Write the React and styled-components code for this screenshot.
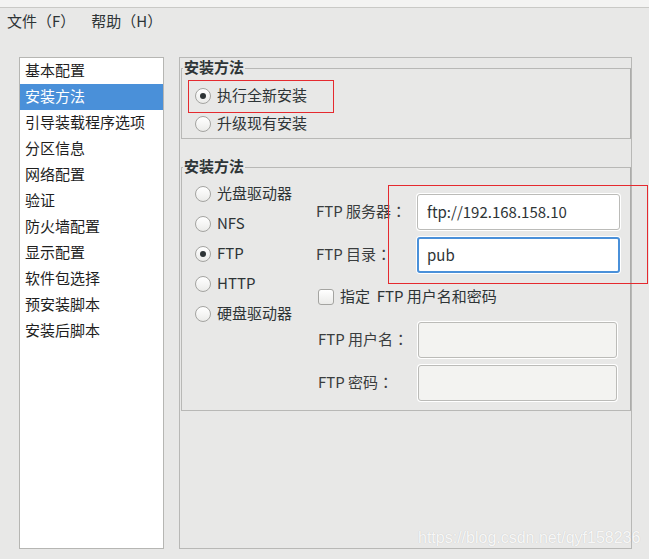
import styled, { createGlobalStyle } from 'styled-components';

const GlobalStyle = createGlobalStyle`
  html, body {
    margin: 0;
    padding: 0;
  }
  body {
    background: #e8e8e7;
    font-family: "Noto Sans CJK SC", "DejaVu Sans", sans-serif;
    font-size: 15px;
    color: #2e3436;
  }
`;

const Window = styled.div`
  position: relative;
  width: 649px;
  height: 559px;
  overflow: hidden;
  background: #e8e8e7;
`;

const TitleStrip = styled.div`
  height: 7px;
  background: #f3f3f2;
  border-bottom: 1px solid #c9c9c6;
`;

const MenuBar = styled.div`
  display: flex;
  height: 28px;
  align-items: center;
  padding-left: 7px;
  gap: 16px;
`;

const MenuItem = styled.span`
  line-height: 26px;
  padding-bottom: 2px;
  color: #2e3436;
`;

const Body = styled.div`
  display: flex;
  padding: 21px 0 0 19px;
`;

const SectionList = styled.ul`
  box-sizing: border-box;
  width: 145px;
  height: 492px;
  margin: 0 15px 0 0;
  padding: 0;
  list-style: none;
  background: #fff;
  border: 1px solid #b6b6b3;
`;

const SectionItem = styled.li`
  box-sizing: border-box;
  height: 26px;
  line-height: 23px;
  padding: 0 0 3px 5px;
  color: ${p => (p.$active ? '#fff' : '#1e1e1e')};
  background: ${p => (p.$active ? '#4a90d9' : 'transparent')};
  white-space: nowrap;
`;

const Panel = styled.div`
  box-sizing: border-box;
  width: 453px;
  height: 492px;
  padding: 2px 0 0 1px;
  border: 1px solid #b8b8b6;
`;

const Group = styled.fieldset`
  margin: ${p => (p.$spaced ? '20px 0 0 0' : '0')};
  padding: 0;
  min-width: 0;
  border: 1px solid #b8b8b6;
  border-right-color: #acacaa;
`;

const Legend = styled.legend`
  margin-left: 1px;
  padding: 0 1px 2px;
  font-weight: bold;
  line-height: 14px;
  color: #2e3436;
`;

const Choices = styled.div`
  display: flex;
  flex-direction: column;
  padding: ${p => p.$pad};
`;

const RadioRow = styled.label`
  position: relative;
  display: flex;
  align-items: center;
  gap: 6px;
  height: ${p => p.$h}px;
  white-space: nowrap;
`;

// CJK glyphs sit low in their line box, lift them a little
const RowText = styled.span`
  display: inline-block;
  line-height: 18px;
  margin-bottom: 3px;
`;

const Colon = styled.span`
  font-family: "Noto Sans CJK TC", sans-serif;
`;

const RadioDot = styled.span`
  position: relative;
  box-sizing: border-box;
  width: 16px;
  height: 16px;
  border-radius: 50%;
  border: 1px solid #a4a4a1;
  background: linear-gradient(#ffffff, #ebebe9);
  flex: none;

  &::after {
    content: '';
    display: ${p => (p.$on ? 'block' : 'none')};
    position: absolute;
    left: 4px;
    top: 4px;
    width: 6px;
    height: 6px;
    border-radius: 50%;
    background: #2e3436;
  }
`;

const RedMark = styled.div`
  position: absolute;
  border: 1px solid #e52a2f;
  box-sizing: border-box;
  pointer-events: none;
`;

const MethodBody = styled.div`
  display: flex;
`;

const SourceColumn = styled(Choices)`
  width: 121px;
  padding: 4px 0 0 13px;
`;

const FormColumn = styled.div`
  position: relative;
  display: flex;
  flex-direction: column;
  padding: 19px 0 9px 0;
`;

const FieldRow = styled.div`
  display: grid;
  grid-template-columns: 101px 203px;
  align-items: center;
  height: 36px;
  margin-top: ${p => p.$gap || 0}px;
`;

const FieldLabel = styled.span`
  padding-left: ${p => (p.$inset ? 2 : 0)}px;
  line-height: 18px;
  margin-bottom: 3px;
  color: #3a3d3e;
  white-space: nowrap;
`;

const TextBox = styled.input`
  box-sizing: border-box;
  height: 36px;
  width: ${p => (p.disabled ? 199 : 203)}px;
  margin-left: ${p => (p.disabled ? 1 : 0)}px;
  padding: 0 ${p => (p.$focused ? 8 : 9)}px 2px;
  border: ${p => (p.$focused ? '2px solid #4a90d9' : '1px solid #bbbbb8')};
  border-radius: 3px;
  background: ${p => (p.disabled ? '#f3f3f1' : '#fff')};
  box-shadow: 0 0 0 1px #fff;
  font: inherit;
  color: #2e3436;
  outline: none;
`;

const CheckRow = styled.label`
  display: flex;
  align-items: center;
  gap: 6px;
  height: 32px;
  margin-top: 8px;
  padding-left: 2px;
  white-space: pre;
`;

const CheckBox = styled.span`
  box-sizing: border-box;
  width: 16px;
  height: 16px;
  border-radius: 3px;
  border: 1px solid #a4a4a1;
  background: linear-gradient(#ffffff, #ebebe9);
  flex: none;
`;

const Watermark = styled.div`
  position: absolute;
  left: 418px;
  top: 529px;
  font-family: "Liberation Sans", Arial, sans-serif;
  font-size: 16px;
  line-height: 18px;
  color: rgba(255, 255, 255, 0.88);
  text-shadow: 0 0 1px rgba(0, 0, 0, 0.18);
  white-space: nowrap;
`;

const sections = [
  '基本配置',
  '安装方法',
  '引导装载程序选项',
  '分区信息',
  '网络配置',
  '验证',
  '防火墙配置',
  '显示配置',
  '软件包选择',
  '预安装脚本',
  '安装后脚本',
];

const sources = [
  { name: '光盘驱动器' },
  { name: 'NFS' },
  { name: 'FTP', on: true },
  { name: 'HTTP' },
  { name: '硬盘驱动器' },
];

export default function App() {
  return (
    <Window>
      <GlobalStyle />
      <TitleStrip />
      <MenuBar>
        <MenuItem>文件（F）</MenuItem>
        <MenuItem>帮助（H）</MenuItem>
      </MenuBar>

      <Body>
        <SectionList>
          {sections.map(s => (
            <SectionItem key={s} $active={s === '安装方法'}>
              {s}
            </SectionItem>
          ))}
        </SectionList>

        <Panel>
          <Group>
            <Legend>安装方法</Legend>
            <Choices $pad="6px 0 0 13px">
              <RadioRow $h={28}>
                <RadioDot $on />
                <RowText>执行全新安装</RowText>
                <RedMark style={{ left: -7, top: -2, width: 146, height: 33 }} />
              </RadioRow>
              <RadioRow $h={28}>
                <RadioDot />
                <RowText>升级现有安装</RowText>
              </RadioRow>
            </Choices>
          </Group>

          <Group $spaced>
            <Legend>安装方法</Legend>
            <MethodBody>
              <SourceColumn>
                {sources.map(src => (
                  <RadioRow key={src.name} $h={30}>
                    <RadioDot $on={src.on} />
                    <RowText>{src.name}</RowText>
                  </RadioRow>
                ))}
              </SourceColumn>

              <FormColumn>
                <RedMark style={{ left: 72, top: 10, width: 260, height: 99 }} />
                <FieldRow>
                  <FieldLabel>FTP 服务器<Colon>：</Colon></FieldLabel>
                  <TextBox readOnly value="ftp://192.168.158.10" />
                </FieldRow>
                <FieldRow $gap={7}>
                  <FieldLabel>FTP 目录<Colon>：</Colon></FieldLabel>
                  <TextBox readOnly $focused value="pub" />
                </FieldRow>
                <CheckRow>
                  <CheckBox />
                  <RowText>{'指定  FTP 用户名和密码'}</RowText>
                </CheckRow>
                <FieldRow $gap={9}>
                  <FieldLabel $inset>FTP 用户名<Colon>：</Colon></FieldLabel>
                  <TextBox disabled value="" />
                </FieldRow>
                <FieldRow $gap={7}>
                  <FieldLabel $inset>FTP 密码<Colon>：</Colon></FieldLabel>
                  <TextBox disabled value="" />
                </FieldRow>
              </FormColumn>
            </MethodBody>
          </Group>
        </Panel>
      </Body>

      <Watermark>https://blog.csdn.net/qyf158236</Watermark>
    </Window>
  );
}
